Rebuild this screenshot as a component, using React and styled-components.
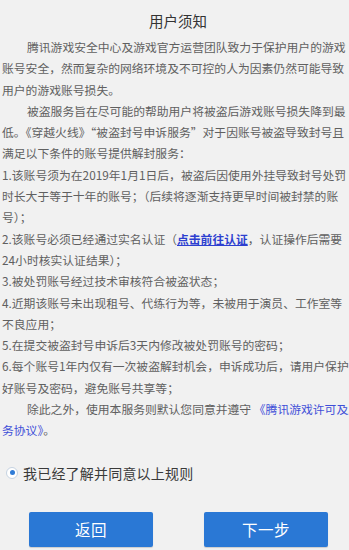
import React from "react";
import styled, { createGlobalStyle } from "styled-components";

const Global = createGlobalStyle`
  html, body { margin: 0; padding: 0; background: #f1f1f1; overflow: hidden; }
  body { font-family: "Noto Sans CJK SC", "Noto Sans", sans-serif; }
`;

const Page = styled.div`
  width: 349px;
  height: 550px;
  display: flex;
  flex-direction: column;
  background: #f1f1f1;
  overflow: hidden;
`;

const Title = styled.h1`
  margin: 0;
  padding-top: 10px;
  width: 356px;
  text-align: center;
  font-size: 14.5px;
  line-height: 21px;
  font-weight: 400;
  color: #333;
`;

const Content = styled.div`
  margin-top: 5px;
  padding-left: 2px;
  font-size: 11.8px;
  line-height: 21.3px;
  color: #606060;
  white-space: nowrap;
  overflow: hidden;
`;

const Para = styled.p`
  margin: 0;
  text-indent: ${(p) => (p.$indent ? "25px" : "0")};
`;

const Link = styled.a`
  color: ${(p) => (p.$strong ? "#2d3fd0" : "#3f4fd8")};
  text-decoration: ${(p) => (p.$underline ? "underline" : "none")};
  font-weight: ${(p) => (p.$strong ? 600 : 400)};
`;

const Agree = styled.label`
  display: flex;
  align-items: center;
  gap: 5px;
  margin-top: 22px;
  padding-left: 6px;
  font-size: 14px;
  letter-spacing: 0.2px;
  color: #3a3a3a;
  line-height: 20px;
`;

const Radio = styled.span`
  width: 10px;
  height: 10px;
  border-radius: 50%;
  border: 1px solid #c6d3e2;
  background: #fff;
  display: flex;
  align-items: center;
  justify-content: center;
  &::after {
    content: "";
    width: 5px;
    height: 5px;
    border-radius: 50%;
    background: #2f7bd6;
  }
`;

const Buttons = styled.div`
  display: flex;
  justify-content: space-between;
  padding: 0 21px 0 29px;
  margin-top: 29px;
`;

const Button = styled.button`
  width: 124px;
  height: 35px;
  border: none;
  border-radius: 2px;
  background: #2a78d5;
  color: #fff;
  font-family: "Noto Sans CJK SC", sans-serif;
  font-size: 15.5px;
  letter-spacing: 0.5px;
  box-shadow: 0 1px 1px rgba(0, 0, 0, 0.15);
`;

export default function App() {
  return (
    <Page>
      <Global />
      <Title>用户须知</Title>
      <Content>
        <Para $indent>
          腾讯游戏安全中心及游戏官方运营团队致力于保护用户的游戏
          <br />
          账号安全，然而复杂的网络环境及不可控的人为因素仍然可能导致
          <br />
          用户的游戏账号损失。
        </Para>
        <Para $indent>
          被盗服务旨在尽可能的帮助用户将被盗后游戏账号损失降到最
          <br />
          低。《穿越火线》“被盗封号申诉服务”对于因账号被盗导致封号且
          <br />
          满足以下条件的账号提供解封服务：
        </Para>
        <Para>
          1.该账号须为在2019年1月1日后，被盗后因使用外挂导致封号处罚
          <br />
          时长大于等于十年的账号；（后续将逐渐支持更早时间被封禁的账
          <br />
          号）；
        </Para>
        <Para>
          2.该账号必须已经通过实名认证（
          <Link $underline $strong href="#">点击前往认证</Link>
          ，认证操作后需要
          <br />
          24小时核实认证结果）；
        </Para>
        <Para>3.被处罚账号经过技术审核符合被盗状态；</Para>
        <Para>
          4.近期该账号未出现租号、代练行为等，未被用于演员、工作室等
          <br />
          不良应用；
        </Para>
        <Para>5.在提交被盗封号申诉后3天内修改被处罚账号的密码；</Para>
        <Para>
          6.每个账号1年内仅有一次被盗解封机会，申诉成功后，请用户保护
          <br />
          好账号及密码，避免账号共享等；
        </Para>
        <Para $indent>
          除此之外，使用本服务则默认您同意并遵守 <Link href="#">《腾讯游戏许可及服</Link>
          <br />
          <Link href="#">务协议》</Link>。
        </Para>
      </Content>
      <Agree>
        <Radio />
        我已经了解并同意以上规则
      </Agree>
      <Buttons>
        <Button>返回</Button>
        <Button>下一步</Button>
      </Buttons>
    </Page>
  );
}
